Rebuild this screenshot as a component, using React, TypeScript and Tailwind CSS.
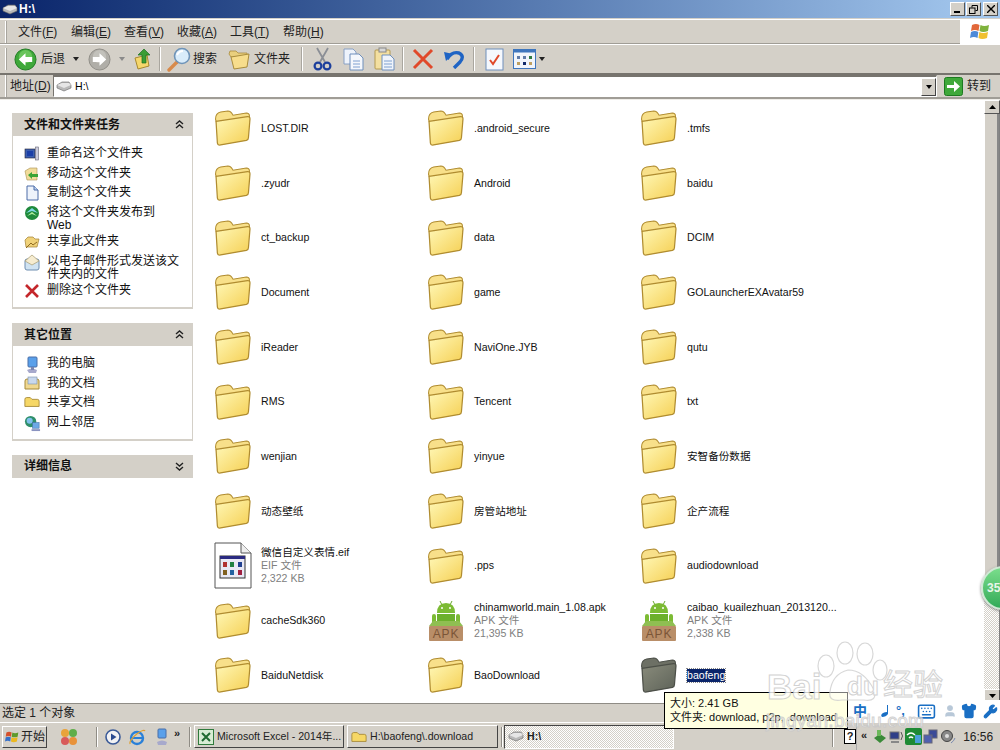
import { Keyboard, Shirt, Wrench, User } from "lucide-react";

const Folder = ({ dark = false }: { dark?: boolean }) => (
  <svg width="36" height="36" viewBox="1.5 1 35 35" className="shrink-0">
    <defs>
      <linearGradient id="fo" x1="0" y1="0" x2="1" y2="1">
        <stop offset="0" stopColor="#fff8b8" />
        <stop offset="1" stopColor="#f5cf52" />
      </linearGradient>
      <linearGradient id="fd" x1="0" y1="0" x2="1" y2="1">
        <stop offset="0" stopColor="#8a8c7c" />
        <stop offset="1" stopColor="#5d6258" />
      </linearGradient>
    </defs>
    <path
      d="M2 10 Q2 4 7 3 L14 2 Q17 2 19 6 L32 4 Q35 4 35 7 L35 12 L5 20Z"
      fill={dark ? "#6d7065" : "#f8e08a"}
      stroke={dark ? "#4c4f48" : "#b08c30"}
      strokeWidth="1"
    />
    <path
      d="M2.5 12 L33 7.5 Q35.8 7.2 35.5 10 L34 28 Q34 30 32 30.6 L7 35 Q4 35.5 3.8 33 Z"
      fill={dark ? "url(#fd)" : "url(#fo)"}
      stroke={dark ? "#4c4f48" : "#b08c30"}
      strokeWidth="1.2"
    />
  </svg>
);

const Apk = () => (
  <svg width="36" height="42" viewBox="0 0 36 42" className="shrink-0">
    <path d="M12 1 L14 5 M24 1 L22 5" stroke="#6aa82e" strokeWidth="1" />
    <path d="M9 13 Q9 3 18 3 Q27 3 27 13Z" fill="#7cbb34" />
    <circle cx="14" cy="8" r="1" fill="#fff" />
    <circle cx="22" cy="8" r="1" fill="#fff" />
    <rect x="9" y="14" width="18" height="10" fill="#6cb02c" />
    <rect x="4" y="14" width="4" height="10" rx="2" fill="#7cbb34" />
    <rect x="28" y="14" width="4" height="10" rx="2" fill="#7cbb34" />
    <path d="M5 21 L31 21 L35 26 L1 26Z" fill="#8fbf52" />
    <rect x="1" y="26" width="34" height="15" rx="1" fill="#b98e68" />
    <text x="18" y="38" textAnchor="middle" fontSize="12" fill="#7b5537" fontFamily="Liberation Sans" letterSpacing="0.8">APK</text>
  </svg>
);

const EifFile = () => (
  <svg width="38" height="47" viewBox="0 0 38 47" className="shrink-0 -mx-[1px]">
    <path d="M1 1 H27 L37 11 V46 H1Z" fill="#fff" stroke="#555" strokeWidth="1" />
    <path d="M27 1 V11 H37" fill="#eee" stroke="#555" strokeWidth="1" />
    <rect x="6" y="14" width="25" height="22" fill="#e8e8f4" stroke="#333" />
    <rect x="6" y="14" width="25" height="3" fill="#2a2a80" />
    {[9, 16, 24].map((x, i) => (
      <g key={x}>
        <rect x={x} y="20" width="4" height="5" fill={["#b03030", "#208040", "#204090"][i]} />
        <rect x={x} y="28" width="4" height="5" fill={["#806020", "#2060a0", "#a02040"][i]} />
      </g>
    ))}
  </svg>
);

const files: { name: string; kind?: "apk" | "eif"; type?: string; size?: string; sel?: boolean }[] = [
  { name: "LOST.DIR" }, { name: ".android_secure" }, { name: ".tmfs" },
  { name: ".zyudr" }, { name: "Android" }, { name: "baidu" },
  { name: "ct_backup" }, { name: "data" }, { name: "DCIM" },
  { name: "Document" }, { name: "game" }, { name: "GOLauncherEXAvatar59" },
  { name: "iReader" }, { name: "NaviOne.JYB" }, { name: "qutu" },
  { name: "RMS" }, { name: "Tencent" }, { name: "txt" },
  { name: "wenjian" }, { name: "yinyue" }, { name: "安智备份数据" },
  { name: "动态壁纸" }, { name: "房管站地址" }, { name: "企产流程" },
  { name: "微信自定义表情.eif", kind: "eif", type: "EIF 文件", size: "2,322 KB" }, { name: ".pps" }, { name: "audiodownload" },
  { name: "cacheSdk360" },
  { name: "chinamworld.main_1.08.apk", kind: "apk", type: "APK 文件", size: "21,395 KB" },
  { name: "caibao_kuailezhuan_2013120...", kind: "apk", type: "APK 文件", size: "2,338 KB" },
  { name: "BaiduNetdisk" }, { name: "BaoDownload" }, { name: "baofeng", sel: true },
];

const Grip = () => <div className="ml-[5px] h-[22px] w-[2px] border-l border-white border-r-[#808080] bg-[#a8a59e] shrink-0" />;
const Sep = ({ ml }: { ml: string }) => <div className={`h-[24px] w-[2px] bg-[#a9a69f] border-r border-white shrink-0 ${ml}`} />;

const Menu = ({ t, k }: { t: string; k: string }) => (
  <span className="w-[37px] whitespace-nowrap">
    {t}(<span className="underline">{k}</span>)
  </span>
);

const Circle = ({ color, dir }: { color: "green" | "gray"; dir: "l" | "r" }) => (
  <svg width="23" height="23" viewBox="0 0 24 24" className="shrink-0">
    <circle cx="12" cy="12" r="11" fill={color === "green" ? "#3fa83a" : "#b0aea8"} stroke={color === "green" ? "#1f7a22" : "#8f8d87"} />
    <circle cx="12" cy="9" r="7" fill={color === "green" ? "#7cd06a" : "#cbc9c3"} opacity="0.7" />
    <path d={dir === "l" ? "M5 12 L12 5.5 V9.5 H19 V14.5 H12 V18.5Z" : "M19 12 L12 5.5 V9.5 H5 V14.5 H12 V18.5Z"} fill="#fff" />
  </svg>
);

const Caret = ({ c = "#222", ml = "" }: { c?: string; ml?: string }) => (
  <svg width="6" height="4" viewBox="0 0 6 4" className={`shrink-0 ${ml}`}><path d="M0 0H6L3 4Z" fill={c} /></svg>
);

const Drive = () => (
  <svg width="16" height="11" viewBox="0 0 16 11" className="shrink-0">
    <path d="M1 4 L6 1 H13 L15 4 L15 7 L8 10 L1 7Z" fill="#b9b9b9" stroke="#666" strokeWidth="0.6" />
    <path d="M1 4 L8 7 L15 4 L13 2 H6Z" fill="#e6e6e6" />
  </svg>
);

const Chevrons = ({ up }: { up: boolean }) => (
  <svg width="9" height="9" viewBox="0 0 9 9" className="shrink-0">
    <path d={up ? "M1 4 L4.5 1 L8 4 M1 8 L4.5 5 L8 8" : "M1 1 L4.5 4 L8 1 M1 5 L4.5 8 L8 5"} fill="none" stroke="#222" strokeWidth="1.4" />
  </svg>
);

const TaskIcon = ({ n }: { n: number }) => {
  const cls = "shrink-0";
  if (n === 0) return <svg width="16" height="16" viewBox="0 0 16 16" className={cls}><rect x="1" y="3" width="10" height="9" fill="#3c5fb0" stroke="#223" strokeWidth=".6" /><rect x="3" y="5" width="6" height="5" fill="#1b3fa8" /><rect x="11.5" y="1" width="3" height="13" fill="#ccd" stroke="#667" strokeWidth=".6" /></svg>;
  if (n === 1) return <svg width="16" height="16" viewBox="0 0 16 16" className={cls}><path d="M1 5 L6 2 H13 V14 H3Z" fill="#f1dc9a" stroke="#a88f50" strokeWidth=".6" /><path d="M4 9 L8 6 V8 H14 V11 H8 V13Z" fill="#3aa336" /></svg>;
  if (n === 2) return <svg width="16" height="16" viewBox="0 0 16 16" className={cls}><path d="M3 1 H10 L14 5 V15 H3Z" fill="#eef3fb" stroke="#4d6da8" /><path d="M10 1 V5 H14" fill="#bcd0ee" stroke="#4d6da8" /></svg>;
  if (n === 3) return <svg width="16" height="16" viewBox="0 0 16 16" className={cls}><circle cx="8" cy="8" r="7" fill="#1f8a3c" /><path d="M2 8 L8 3 L14 8 L8 6Z" fill="#7fd8e8" /><path d="M3 11 L8 7 L13 11 L8 9Z" fill="#b2f0a0" /></svg>;
  if (n === 4) return <svg width="16" height="16" viewBox="0 0 16 16" className={cls}><path d="M1 6 L4 3 H9 L11 5 H15 L13 13 H2Z" fill="#f0d27a" stroke="#a07f30" strokeWidth=".7" /><path d="M2 14 L7 9 L9 11 L13 8" stroke="#8f6a20" fill="none" /></svg>;
  if (n === 5) return <svg width="16" height="18" viewBox="0 0 16 18" className={cls}><rect x="1" y="5" width="14" height="11" rx="2" fill="#d0e3f2" stroke="#6e8db0" /><path d="M1 7 L8 1 L15 7 L8 11Z" fill="#f6ecd0" stroke="#a59a70" strokeWidth=".7" /></svg>;
  if (n === 6) return <svg width="16" height="16" viewBox="0 0 16 16" className={cls}><path d="M2 2 L14 14 M14 2 L2 14" stroke="#c4272b" strokeWidth="2.6" /></svg>;
  if (n === 7) return <svg width="16" height="18" viewBox="0 0 16 18" className={cls}><rect x="4" y="1" width="9" height="10" rx="1" fill="#5aa0ea" stroke="#4a6fa8" /><path d="M3 14 Q8 11 13 14 L12 17 H5Z" fill="#a7a9cc" /><rect x="7" y="11" width="3" height="3" fill="#7a86b0" /></svg>;
  if (n === 8) return <svg width="16" height="14" viewBox="0 0 16 14" className={cls}><path d="M1 5 Q1 3 3 3 H13 Q15 3 15 5 V13 H1Z" fill="#f0d890" stroke="#a68a3a" /><rect x="4" y="1" width="9" height="7" fill="#c8d8ee" stroke="#7a8fa8" strokeWidth=".6" /></svg>;
  if (n === 10) return <svg width="16" height="14" viewBox="0 0 18 14" className={cls}><path d="M1 4 Q1 2 3 2 H7 L9 4 H15 Q17 4 17 6 V12 H1Z" fill="#f6d766" stroke="#a68a3a" /></svg>;
  return <svg width="17" height="17" viewBox="0 0 18 18" className={cls}><circle cx="7" cy="7" r="6" fill="#2f8f6a" /><circle cx="6" cy="6" r="3.2" fill="#7fc0ec" /><rect x="9" y="8" width="7" height="6" fill="#6da8e6" stroke="#4470a8" strokeWidth=".6" /><path d="M8 16 H17" stroke="#8a93c0" strokeWidth="2" /></svg>;
};

const Item = ({ n, lines }: { n: number; lines: string[] }) => (
  <div className={`flex items-start ${lines.length > 1 ? "mb-[-3px]" : ""}`}>
    <div className="w-[16px] h-[13px] flex justify-center items-start shrink-0 mt-[-1px]"><TaskIcon n={n} /></div>
    <div className="ml-[7px] text-[12px] leading-[13px] text-[#111] whitespace-nowrap">
      {lines.map((l) => <div key={l}>{l}</div>)}
    </div>
  </div>
);

const Panel = ({ title, up, children, cls }: { title: string; up: boolean; children?: React.ReactNode; cls: string }) => (
  <div className={cls}>
    <div className="h-[23px] bg-[#d4d0c8] flex items-center justify-between pl-[12px] pr-[9px]">
      <span className="font-bold text-[12px] text-[#111]">{title}</span>
      <Chevrons up={up} />
    </div>
    {children && <div className="bg-white border border-t-0 border-[#d4d0c8] border-b-2 pl-[11px] pr-1 pt-[11px] pb-[10px] flex flex-col gap-[6.5px]">{children}</div>}
  </div>
);

const Watermark = () => (
  <div className="absolute left-[760px] top-[640px] w-[240px] h-[92px] pointer-events-none text-white opacity-80 [-webkit-text-stroke:1px_#c8c8c8]">
    <svg width="120" height="64" viewBox="0 0 120 64" className="absolute left-[28px] top-0" fill="#fff" stroke="#cfcfcf" strokeWidth="1.2">
      <ellipse cx="38" cy="26" rx="8" ry="11" fillOpacity="0.6" />
      <ellipse cx="57" cy="13" rx="8" ry="11" fillOpacity="0.6" />
      <ellipse cx="77" cy="14" rx="8" ry="11" fillOpacity="0.6" />
      <ellipse cx="92" cy="30" rx="7" ry="10" fillOpacity="0.6" />
      <path d="M42 52 Q44 34 60 30 Q76 30 86 50 Q90 62 76 60 L54 60 Q40 62 42 52Z" fillOpacity="0.6" />
    </svg>
    <span className="absolute left-[7px] top-[29px] text-[35px] leading-[35px] font-bold">Bai</span>
    <span className="absolute left-[87px] top-[33px] text-[26px] leading-[26px] font-bold">du</span>
    <span className="absolute left-[123px] top-[28px] text-[30px] leading-[34px]">经验</span>
    <span className="absolute left-[6px] top-[70px] text-[19px] leading-[22px] tracking-[0.3px]">jingyan.baidu.com</span>
  </div>
);

export default function App() {
  return (
    <div className="relative w-[1000px] h-[750px] overflow-hidden flex flex-col bg-[#d4d0c8] text-black [font-family:'Liberation_Sans','Noto_Sans_CJK_SC',sans-serif]">
      {/* title bar */}
      <div className="h-[18px] shrink-0 flex items-center bg-gradient-to-r from-[#0a246a] to-[#a6caf0] pl-[2px] pr-[2px]">
        <Drive />
        <span className="ml-[1px] text-white font-bold text-[12px]">H:\</span>
        <div className="ml-auto flex gap-0 items-center">
          <div className="w-[15px] h-[14px] bg-[#d4d0c8] border border-white border-r-[#555] border-b-[#555] flex items-end justify-start pl-[3px] pb-[2px]"><div className="w-[6px] h-[2px] bg-black" /></div>
          <div className="ml-[1px] w-[15px] h-[14px] bg-[#d4d0c8] border border-white border-r-[#555] border-b-[#555] flex items-center justify-center"><svg width="9" height="9" viewBox="0 0 9 9" fill="none" stroke="#000"><path d="M3 2.5 V.5 H8.5 V5.5 H6.5" /><rect x=".5" y="3" width="5.5" height="5.5" /></svg></div>
          <div className="ml-[2px] w-[15px] h-[14px] bg-[#d4d0c8] border border-white border-r-[#555] border-b-[#555] flex items-center justify-center"><svg width="8" height="8" viewBox="0 0 8 8" stroke="#000" strokeWidth="1.4"><path d="M0 0 L8 8 M8 0 L0 8" /></svg></div>
        </div>
      </div>

      {/* menu */}
      <div className="h-[25px] mt-[1px] shrink-0 flex items-center border-t border-white border-b border-b-[#a09d96]">
        <Grip />
        <div className="ml-[11px] flex gap-[16px] text-[12px] text-[#222]">
          <Menu t="文件" k="F" /><Menu t="编辑" k="E" /><Menu t="查看" k="V" />
          <Menu t="收藏" k="A" /><Menu t="工具" k="T" /><Menu t="帮助" k="H" />
        </div>
        <div className="ml-auto w-[40px] h-[25px] bg-white flex items-center justify-center">
          <svg width="20" height="19" viewBox="0 0 20 19">
            <path d="M2 3 Q6 1 9.5 3 L8.5 9 Q5 7 1 9Z" fill="#e2683a" />
            <path d="M10.5 3 Q14 5 19 3 L18 9 Q13 11 9.5 9Z" fill="#7fb23c" />
            <path d="M1 10 Q5 8 8.3 10 L7.5 16 Q4 14 0 16Z" fill="#4d8ad8" />
            <path d="M9.3 10 Q13 12 18 10 L17 16 Q12 18 8.5 16Z" fill="#f0c030" />
          </svg>
        </div>
      </div>

      {/* toolbar */}
      <div className="h-[31px] shrink-0 flex items-center border-t border-white border-b-2 border-b-[#77746e]">
        <Grip />
        <div className="ml-[7px]"><Circle color="green" dir="l" /></div>
        <span className="ml-[4px] text-[12px] w-[24px] text-[#222]">后退</span>
        <Caret ml="ml-[8px]" />
        <div className="ml-[9px]"><Circle color="gray" dir="r" /></div>
        <Caret c="#8a8a8a" ml="ml-[8px]" />
        <svg width="20" height="22" viewBox="0 0 20 22" className="ml-[9px] shrink-0">
          <path d="M1 10 L13 7 L15 18 L4 21Z" fill="#f5d76c" stroke="#a8892f" />
          <path d="M8 15 V7 H4 L10 1 L16 7 H12 V15Z" fill="#3a9d34" stroke="#1d6f1f" strokeWidth=".7" />
        </svg>
        <Sep ml="ml-[5px]" />
        <svg width="25" height="25" viewBox="0 0 25 25" className="ml-[6px] shrink-0">
          <path d="M10 15 L2 23" stroke="#d88a4a" strokeWidth="3.4" strokeLinecap="round" />
          <circle cx="15" cy="9" r="7.5" fill="#d9ecfa" stroke="#6f94b8" strokeWidth="1.6" />
          <path d="M10 8 Q12 4 16 4" stroke="#fff" strokeWidth="2" fill="none" />
        </svg>
        <span className="ml-[1px] w-[24px] text-[12px] text-[#222]">搜索</span>
        <svg width="23" height="22" viewBox="0 0 23 22" className="ml-[11px] shrink-0">
          <path d="M1 6 L2 3 H8 L10 5 H19 V9 H3Z" fill="#e9cf7d" stroke="#a98c3c" strokeWidth=".8" />
          <path d="M3 9 L21 6 L19 19 L6 21Z" fill="#f7dd8c" stroke="#a98c3c" />
        </svg>
        <span className="ml-[3px] w-[36px] text-[12px] text-[#222]">文件夹</span>
        <Sep ml="ml-[11px]" />
        <svg width="19" height="24" viewBox="0 0 19 24" className="ml-[10px] shrink-0" fill="none">
          <path d="M4 1 L12 15 M15 1 L7 15" stroke="#8b8f96" strokeWidth="1.8" />
          <circle cx="5" cy="19" r="3.4" stroke="#1c3f9c" strokeWidth="2.2" />
          <circle cx="14" cy="19" r="3.4" stroke="#1c3f9c" strokeWidth="2.2" />
        </svg>
        <svg width="21" height="23" viewBox="0 0 21 23" className="ml-[11px] shrink-0">
          <path d="M1 1 H10 L13 4 V16 H1Z" fill="#eef3fb" stroke="#88a0c4" />
          <path d="M7 6 H16 L20 10 V22 H7Z" fill="#f4f7fc" stroke="#6f8fbc" />
          <path d="M10 13 H17 M10 16 H17 M10 19 H17" stroke="#7fa0d0" />
        </svg>
        <svg width="21" height="24" viewBox="0 0 21 24" className="ml-[10px] shrink-0">
          <rect x="1" y="3" width="15" height="19" rx="1" fill="#f3dfa0" stroke="#b49a50" />
          <rect x="5" y="1" width="7" height="4" fill="#d8d8d8" stroke="#888" />
          <path d="M8 8 H16 L20 12 V23 H8Z" fill="#eff4fb" stroke="#6f8fbc" />
          <path d="M10 14 H18 M10 17 H18 M10 20 H18" stroke="#7fa0d0" />
        </svg>
        <Sep ml="ml-[7px]" />
        <svg width="22" height="22" viewBox="0 0 22 22" className="ml-[8px] shrink-0"><path d="M2 2 L20 20 M20 2 L2 20" stroke="#e0492a" strokeWidth="3" /></svg>
        <svg width="22" height="20" viewBox="0 0 22 20" className="ml-[9px] shrink-0" fill="none">
          <path d="M4 10 Q9 2 16 4 Q22 7 17 13 L11 19" stroke="#1f64c4" strokeWidth="3.4" />
          <path d="M1 3 L10 5 L3 12Z" fill="#1f64c4" />
        </svg>
        <Sep ml="ml-[8px]" />
        <svg width="19" height="23" viewBox="0 0 19 23" className="ml-[10px] shrink-0">
          <rect x="1" y="1" width="17" height="21" fill="#f5f8fd" stroke="#6f8fbc" />
          <path d="M5 12 L8 16 L14 7" stroke="#e0492a" strokeWidth="2" fill="none" />
        </svg>
        <svg width="23" height="20" viewBox="0 0 23 20" className="ml-[9px] shrink-0">
          <rect x=".5" y=".5" width="22" height="19" fill="#f1f5fb" stroke="#3f76bd" />
          <rect x=".5" y=".5" width="22" height="3" fill="#3f76bd" />
          {[4, 10, 16].map((x) => (
            <g key={x}>
              <rect x={x} y="7" width="3" height="3" fill={x === 16 ? "#2f7a40" : "#607ba8"} />
              <rect x={x} y="13" width="3" height="3" fill={x === 10 ? "#122a6a" : "#c0a060"} />
            </g>
          ))}
        </svg>
        <Caret ml="ml-[3px]" />
      </div>

      {/* address */}
      <div className="h-[24px] shrink-0 flex items-center border-b-2 border-b-[#a09d96]">
        <Grip />
        <span className="ml-[3px] w-[38px] text-[12px] whitespace-nowrap text-[#222]">地址(<span className="underline">D</span>)</span>
        <div className="ml-[5px] w-[884px] h-[22px] bg-white border border-t-2 border-[#77746e] border-r-white border-b-white flex items-center pl-[2px]">
          <Drive />
          <span className="ml-[3px] text-[10.6px]">H:\</span>
          <div className="ml-auto h-[18px] w-[15px] bg-[#d4d0c8] border border-white border-r-[#444] border-b-[#444] flex items-center justify-center"><Caret c="#000" /></div>
        </div>
        <svg width="19" height="19" viewBox="0 0 19 19" className="ml-[7px] shrink-0">
          <rect x=".5" y=".5" width="18" height="18" rx="2" fill="#3fa83a" stroke="#1d7a20" />
          <path d="M3 8 H10 V4 L16 9.5 L10 15 V11 H3Z" fill="#fff" />
        </svg>
        <span className="ml-[4px] text-[12px] text-[#222]">转到</span>
      </div>

      {/* main */}
      <div className="flex-1 min-h-0 flex bg-white border-t border-[#efede8]">
        <div className="w-[203px] shrink-0 pl-[12px] pr-[10px]">
          <Panel title="文件和文件夹任务" up cls="mt-[13px]">
            <Item n={0} lines={["重命名这个文件夹"]} />
            <Item n={1} lines={["移动这个文件夹"]} />
            <Item n={2} lines={["复制这个文件夹"]} />
            <Item n={3} lines={["将这个文件夹发布到", "Web"]} />
            <Item n={4} lines={["共享此文件夹"]} />
            <Item n={5} lines={["以电子邮件形式发送该文", "件夹内的文件"]} />
            <Item n={6} lines={["删除这个文件夹"]} />
          </Panel>
          <Panel title="其它位置" up cls="mt-[14px]">
            <Item n={7} lines={["我的电脑"]} />
            <Item n={8} lines={["我的文档"]} />
            <Item n={10} lines={["共享文档"]} />
            <Item n={11} lines={["网上邻居"]} />
          </Panel>
          <Panel title="详细信息" up={false} cls="mt-[14px]" />
        </div>

        <div className="flex-1 min-w-0 pl-[12px] pt-[1px] grid grid-cols-[repeat(3,213px)] auto-rows-[54.7px] content-start">
          {files.map((f) => (
            <div key={f.name} className="flex items-center">
              <div className="w-[36px] shrink-0 flex justify-center">
                {f.kind === "apk" ? <Apk /> : f.kind === "eif" ? <EifFile /> : <Folder dark={f.sel} />}
              </div>
              <div className="ml-[10px] text-[10.6px] leading-[13px] text-[#111]">
                <div className={f.sel ? "bg-[#0a246a] text-white outline-dotted outline-1 outline-[#888]" : ""}>{f.name}</div>
                {f.type && <div className="text-[#808080]">{f.type}</div>}
                {f.size && <div className="text-[#808080]">{f.size}</div>}
              </div>
            </div>
          ))}
        </div>

        {/* scrollbar */}
        <div className="w-[16px] shrink-0 flex flex-col">
          <div className="h-[14px] bg-[#d4d0c8] border border-white border-r-[#555] border-b-[#555] flex items-center justify-center"><svg width="7" height="4" viewBox="0 0 7 4"><path d="M0 4H7L3.5 0Z" /></svg></div>
          <div className="flex-1 flex flex-col border-r border-[#808080]">
            <div className="h-[484px] bg-[#d4d0c8] border-l border-white border-r-2 border-r-[#888]" />
            <div className="flex-1 bg-[repeating-conic-gradient(#d4d0c8_0_25%,#ffffff_0_50%)] bg-[length:2px_2px]" />
          </div>
          <div className="h-[14px] bg-[#d4d0c8] border border-white border-r-[#555] border-b-[#555] flex items-center justify-center"><svg width="7" height="4" viewBox="0 0 7 4"><path d="M0 0H7L3.5 4Z" /></svg></div>
        </div>
      </div>

      {/* status */}
      <div className="h-[19px] shrink-0 flex items-center pl-[2px] text-[12px] border-t border-[#8f8c85] text-[#222]">选定 1 个对象</div>

      {/* taskbar */}
      <div className="h-[28px] shrink-0 flex items-center border-t border-white text-[12px] text-[#222]">
        <div className="ml-[2px] w-[45px] h-[22px] border border-white border-r-[#444] border-b-[#444] flex items-center pl-[2px]">
          <svg width="14" height="14" viewBox="0 0 20 19" className="shrink-0">
            <path d="M2 3 Q6 1 9.5 3 L8.5 9 Q5 7 1 9Z" fill="#d5512c" />
            <path d="M10.5 3 Q14 5 19 3 L18 9 Q13 11 9.5 9Z" fill="#5f9a2c" />
            <path d="M1 10 Q5 8 8.3 10 L7.5 16 Q4 14 0 16Z" fill="#3670c8" />
            <path d="M9.3 10 Q13 12 18 10 L17 16 Q12 18 8.5 16Z" fill="#ecb820" />
          </svg>
          <span className="ml-[2px]">开始</span>
        </div>
        <svg width="18" height="18" viewBox="0 0 18 18" className="ml-[13px] shrink-0">
          <circle cx="5" cy="5" r="4" fill="#e8a33a" /><circle cx="13" cy="5" r="4" fill="#5fae4a" />
          <circle cx="5" cy="13" r="4" fill="#d85a5a" /><circle cx="13" cy="13" r="4" fill="#e8923a" />
        </svg>
        <div className="ml-[18px] w-[2px] h-[20px] bg-[#8f8c85] border-r border-white shrink-0" />
        <svg width="16" height="16" viewBox="0 0 16 16" className="ml-[7px] shrink-0">
          <circle cx="8" cy="8" r="7" fill="#f2f2f4" stroke="#3a5a98" strokeWidth="1.6" />
          <path d="M6 4.5 L11.5 8 L6 11.5Z" fill="#2a4a90" />
        </svg>
        <svg width="18" height="18" viewBox="0 0 18 18" className="ml-[7px] shrink-0" fill="none">
          <circle cx="9" cy="10" r="6" stroke="#2a80d8" strokeWidth="2.4" />
          <path d="M3 10 H15" stroke="#2a80d8" strokeWidth="2" />
          <path d="M2 16 Q1 12 10 5 Q16 1 17 3" stroke="#e0a030" strokeWidth="1.2" />
        </svg>
        <svg width="14" height="18" viewBox="0 0 14 18" className="ml-[9px] shrink-0">
          <rect x="3" y="1" width="8" height="9" rx="1" fill="#5aa0ea" stroke="#4a6fa8" />
          <path d="M2 14 Q7 11 12 14 L11 17 H3Z" fill="#a7a9cc" />
        </svg>
        <span className="ml-[5px] w-[10px] font-bold text-[11px] mt-[-6px]">»</span>
        <div className="ml-[5px] w-[2px] h-[20px] bg-[#8f8c85] border-r border-white shrink-0" />
        <div className="ml-[3px] w-[150px] h-[23px] border border-white border-r-[#444] border-b-[#444] flex items-center pl-[3px] text-[10.6px] whitespace-nowrap">
          <svg width="16" height="16" viewBox="0 0 16 16" className="shrink-0"><rect x=".5" y=".5" width="15" height="15" fill="#d8ecd4" stroke="#2f7a3c" /><path d="M4 4 L12 12 M12 4 L4 12" stroke="#1f6a30" strokeWidth="2" /></svg>
          <span className="ml-[3px]">Microsoft Excel - 2014年...</span>
        </div>
        <div className="ml-[3px] w-[151px] h-[23px] border border-white border-r-[#444] border-b-[#444] flex items-center pl-[3px] text-[10.6px] whitespace-nowrap">
          <TaskIcon n={10} />
          <span className="ml-[3px]">H:\baofeng\.download</span>
        </div>
        <div className="ml-[3px] w-[2px] h-[20px] bg-[#8f8c85] border-r border-white shrink-0" />
        <div className="ml-[1px] w-[170px] h-[24px] border border-[#444] border-r-white border-b-white flex items-center pl-[3px] text-[10.6px] bg-[repeating-conic-gradient(#d4d0c8_0_25%,#ffffff_0_50%)] bg-[length:2px_2px]">
          <Drive />
          <span className="ml-[3px] font-bold">H:\</span>
        </div>
        <div className="ml-[158px] w-[2px] h-[20px] bg-[#8f8c85] border-r border-white shrink-0" />
        <div className="ml-[10px] w-[12px] h-[15px] bg-white border border-black text-[11px] leading-[13px] font-bold text-center shrink-0">?</div>
        <div className="flex-1 self-stretch flex items-center border-l border-[#aaa] pl-[4px]">
          <span className="font-bold text-[11px] mt-[-3px] text-[#222]">«</span>
          <svg width="16" height="16" viewBox="0 0 16 16" className="ml-[5px] shrink-0"><path d="M2 9 L8 5 L14 9 L8 14Z" fill="#3a8a38" /><rect x="5" y="1" width="4" height="6" fill="#6cb85a" /></svg>
          <svg width="16" height="16" viewBox="0 0 16 16" className="ml-[1px] shrink-0"><rect x="1" y="3" width="9" height="7" fill="#2f3f88" stroke="#777" /><path d="M2 13 H10" stroke="#888" strokeWidth="2" /><path d="M12 3 Q15 7 12 11" stroke="#555" fill="none" /></svg>
          <svg width="17" height="17" viewBox="0 0 17 17" className="shrink-0"><rect width="17" height="17" rx="2" fill="#1f8a34" /><path d="M2 7 Q6 3 10 7 M4 10 Q6 8 8 10" stroke="#fff" strokeWidth="1.4" fill="none" /><rect x="10" y="7" width="6" height="8" fill="#4aa0d8" /></svg>
          <svg width="16" height="16" viewBox="0 0 16 16" className="ml-[1px] shrink-0"><rect x="6" y="1" width="8" height="8" fill="#3a4a98" stroke="#667" /><rect x="1" y="6" width="8" height="8" fill="#5060b0" stroke="#667" /></svg>
          <svg width="16" height="16" viewBox="0 0 16 16" className="ml-[1px] shrink-0" fill="none"><circle cx="7" cy="7" r="5.5" fill="#888" stroke="#444" /><circle cx="7" cy="7" r="2" fill="#ddd" /><path d="M11 14 Q14 12 15 9" stroke="#7a8ab0" /></svg>
          <span className="ml-[7px] text-[12px] text-[#222]">16:56</span>
        </div>
      </div>

      {/* tooltip */}
      <div className="absolute left-[664px] top-[692px] w-[184px] h-[37px] bg-[#ffffe1] border border-black pl-[5px] pt-[4px] text-[11px] leading-[13.5px] text-[#111]">
        <div>大小: 2.41 GB</div>
        <div className="whitespace-nowrap">文件夹: download, p2p, .download</div>
      </div>

      {/* language bar */}
      <div className="absolute left-[848px] top-[700px] w-[152px] h-[22px] bg-white flex items-center pl-[5px] text-[#1a6fc4]">
        <span className="text-[14px] font-bold leading-none">中</span>
        <svg width="12" height="14" viewBox="0 0 12 14" className="ml-[13px] shrink-0"><path d="M8 1 V10 Q6 13 2 13 Q0 11 3 9 Q5 8 7 8 V1Z" fill="#1a6fc4" /></svg>
        <span className="ml-[4px] w-[12px] text-[13px] font-bold leading-none mt-[-2px]">°,</span>
        <Keyboard className="ml-[9px] shrink-0" size={19} strokeWidth={2} />
        <User className="ml-[7px] shrink-0 text-[#b8c8d8] fill-[#b8c8d8]" size={14} />
        <Shirt className="ml-[4px] shrink-0 fill-[#1a6fc4]" size={16} />
        <Wrench className="ml-[6px] shrink-0 fill-[#1a6fc4]" size={15} />
      </div>

      {/* floating ball */}
      <div className="absolute left-[981px] top-[566px] w-[44px] h-[44px] rounded-full bg-gradient-to-b from-[#7ade8c] to-[#2faa58] border-2 border-[#cfe8d4] shadow-[0_1px_3px_#777] flex items-center pl-[4px] text-[12px] font-bold text-[#e8f5ea]">35</div>

      <Watermark />
    </div>
  );
}
